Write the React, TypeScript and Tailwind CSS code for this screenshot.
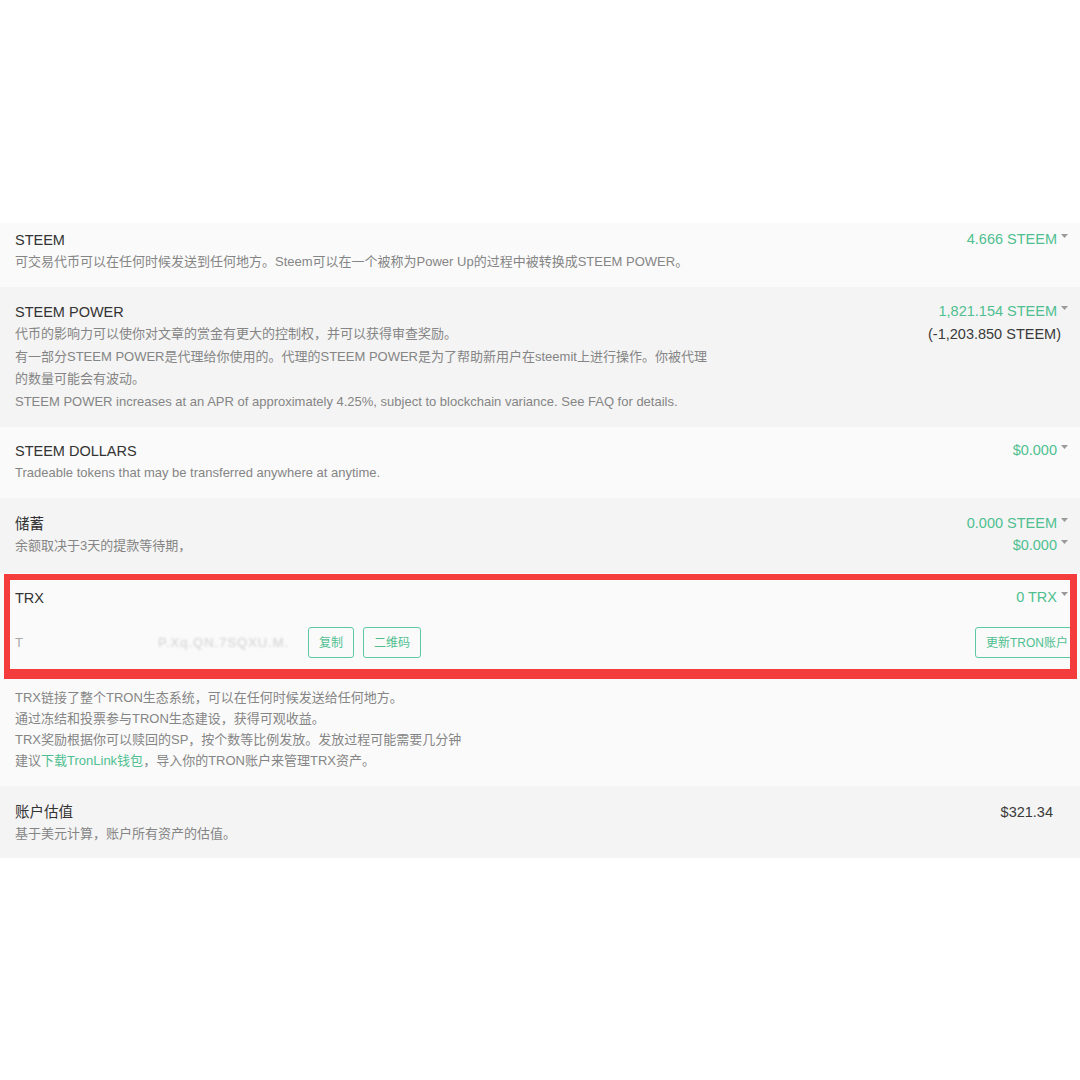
import React from 'react';

// Wallet balances panel (Steemit wallet, Chinese locale)
const font = "font-['Liberation_Sans','Noto_Sans_CJK_SC',sans-serif]";

const Caret: React.FC = () => (
  <svg width="7" height="4" viewBox="0 0 7 4" className="ml-[4px] mb-[8px] shrink-0">
    <path d="M0 0h7L3.5 4z" fill="#9a9a9a" />
  </svg>
);

const Amount: React.FC<{ children: React.ReactNode }> = ({ children }) => (
  <div className="flex items-center justify-end h-[22px] text-[14.5px] text-[#4fbf90]">
    {children}
    <Caret />
  </div>
);

interface RowProps {
  title: string;
  desc: React.ReactNode;
  right: React.ReactNode;
  className: string;
}

const Row: React.FC<RowProps> = ({ title, desc, right, className }) => (
  <div className={`flex justify-between pl-[15px] pr-[12px] ${className}`}>
    <div>
      <div className="text-[14.5px] leading-[22px] text-[#333]">{title}</div>
      <div className="text-[13px] leading-[22px] text-[#858585]">{desc}</div>
    </div>
    <div className="flex flex-col items-end">{right}</div>
  </div>
);

const OutlineButton: React.FC<{ label: string; className?: string }> = ({ label, className = '' }) => (
  <button
    className={`h-[31px] px-[10px] rounded-[3px] border border-[#5cc9a0] text-[12px] text-[#4fbf90] bg-transparent whitespace-nowrap ${className}`}
  >
    {label}
  </button>
);

const App: React.FC = () => {
  return (
    <div className={`w-[1080px] h-[1080px] bg-white pt-[223px] ${font}`}>
      <Row
        className="bg-[#fafafa] pt-[6px] pb-[14px]"
        title="STEEM"
        desc="可交易代币可以在任何时候发送到任何地方。Steem可以在一个被称为Power Up的过程中被转换成STEEM POWER。"
        right={<Amount>4.666 STEEM</Amount>}
      />
      <Row
        className="bg-[#f4f4f4] pt-[14px] pb-[14px]"
        title="STEEM POWER"
        desc={
          <div className="leading-[22.5px]">
            <div>代币的影响力可以使你对文章的赏金有更大的控制权，并可以获得审查奖励。</div>
            <div className="whitespace-nowrap">
              有一部分STEEM POWER是代理给你使用的。代理的STEEM POWER是为了帮助新用户在steemit上进行操作。你被代理
            </div>
            <div>的数量可能会有波动。</div>
            <div>STEEM POWER increases at an APR of approximately 4.25%, subject to blockchain variance. See FAQ for details.</div>
          </div>
        }
        right={
          <>
            <Amount>1,821.154 STEEM</Amount>
            <div className="h-[23px] leading-[23px] text-[14.5px] text-[#3a3a3a] mr-[7px]">(-1,203.850 STEEM)</div>
          </>
        }
      />
      <Row
        className="bg-[#fafafa] pt-[13px] pb-[14px]"
        title="STEEM DOLLARS"
        desc="Tradeable tokens that may be transferred anywhere at anytime."
        right={<Amount>$0.000</Amount>}
      />
      <Row
        className="bg-[#f4f4f4] pt-[15px] pb-[16px]"
        title="储蓄"
        desc="余额取决于3天的提款等待期，"
        right={
          <>
            <Amount>0.000 STEEM</Amount>
            <Amount>$0.000</Amount>
          </>
        }
      />

      {/* TRX block with the red highlight box drawn over it */}
      <div className="relative bg-[#fafafa]">
        <div className="pl-[15px] pr-[12px] pt-[14px]">
          <div className="flex justify-between">
            <div className="text-[14.5px] leading-[22px] text-[#333]">TRX</div>
            <Amount>0 TRX</Amount>
          </div>
          <div className="flex items-center mt-[18px] pb-[21px]">
            <div className="w-[277px] text-[13px] whitespace-nowrap flex items-center">
              <span className="text-[#aaa]">T</span>
              <span className="ml-[135px] text-[#d0d0d0] blur-[1px] tracking-[1px]">P.Xq.QN.7SQXU.M.</span>
            </div>
            <OutlineButton label="复制" className="ml-[16px]" />
            <OutlineButton label="二维码" className="ml-[9px]" />
            <OutlineButton label="更新TRON账户" className="ml-auto mr-[-7px] w-[100px] px-0" />
          </div>
        </div>
        <div className="px-[15px] pt-[8px] pb-[15px] text-[13px] leading-[21px] text-[#858585]">
          <div>TRX链接了整个TRON生态系统，可以在任何时候发送给任何地方。</div>
          <div>通过冻结和投票参与TRON生态建设，获得可观收益。</div>
          <div>TRX奖励根据你可以赎回的SP，按个数等比例发放。发放过程可能需要几分钟</div>
          <div>
            建议<span className="text-[#4fbf90]">下载TronLink钱包</span>，导入你的TRON账户来管理TRX资产。
          </div>
        </div>
        <div className="absolute left-[4px] top-[1px] w-[1073px] h-[105px] border-[#f43c3c] border-t-[6px] border-l-[6px] border-r-[7px] border-b-[10px] pointer-events-none" />
      </div>

      <Row
        className="bg-[#f4f4f4] pt-[15px] pb-[13px]"
        title="账户估值"
        desc="基于美元计算，账户所有资产的估值。"
        right={<div className="h-[22px] leading-[22px] text-[14.5px] text-[#3a3a3a] mr-[15px]">$321.34</div>}
      />
    </div>
  );
};

export default App;
